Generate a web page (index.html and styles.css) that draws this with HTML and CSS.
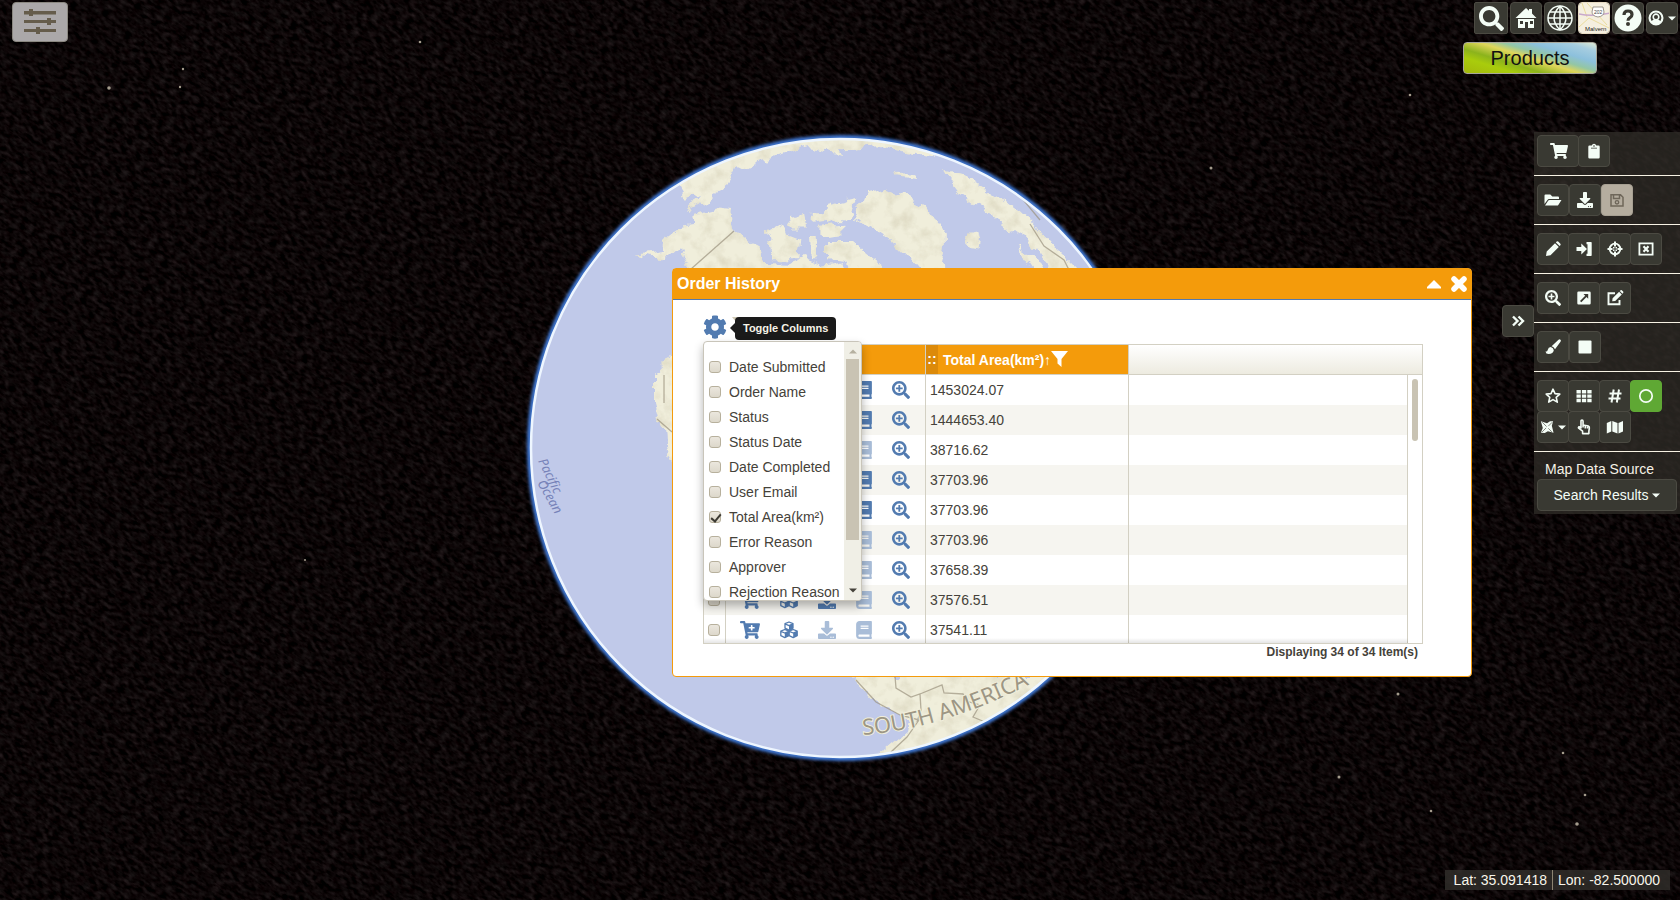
FILE: index.html
```html
<!DOCTYPE html>
<html lang="en">
<head>
<meta charset="utf-8">
<title>Order History</title>
<link rel="stylesheet" href="styles.css">
</head>
<body>
<svg class="defs" aria-hidden="true">
  <symbol id="i-search" viewBox="0 0 512 512"><path d="M505 442.7L405.3 343c-4.5-4.5-10.6-7-17-7H372c27.6-35.3 44-79.7 44-128C416 93.1 322.9 0 208 0S0 93.1 0 208s93.1 208 208 208c48.3 0 92.7-16.4 128-44v16.3c0 6.4 2.5 12.5 7 17l99.7 99.7c9.4 9.4 24.6 9.4 33.9 0l28.3-28.3c9.4-9.4 9.4-24.6.1-34zM208 336c-70.7 0-128-57.2-128-128 0-70.7 57.2-128 128-128 70.7 0 128 57.2 128 128 0 70.7-57.2 128-128 128z"/></symbol>
  <symbol id="i-zoom" viewBox="0 0 512 512"><path fill-rule="evenodd" d="M505 442.7L405.3 343c-4.5-4.5-10.6-7-17-7H372c27.6-35.3 44-79.7 44-128C416 93.1 322.9 0 208 0S0 93.1 0 208s93.1 208 208 208c48.3 0 92.7-16.4 128-44v16.3c0 6.4 2.5 12.5 7 17l99.7 99.7c9.4 9.4 24.6 9.4 33.9 0l28.3-28.3c9.4-9.4 9.4-24.6.1-34zM208 344a136 136 0 1 1 0-272 136 136 0 0 1 0 272z"/><path d="M182 112h52v70h70v52h-70v70h-52v-70h-70v-52h70z"/></symbol>
  <symbol id="i-cog" viewBox="0 0 512 512"><path d="M487.4 315.7l-42.6-24.6c4.3-23.2 4.3-47 0-70.2l42.6-24.6c4.9-2.8 7.1-8.6 5.5-14-11.1-35.6-30-67.8-54.7-94.6-3.8-4.1-10-5.1-14.8-2.3L380.8 110c-17.9-15.4-38.5-27.3-60.8-35.1V25.8c0-5.6-3.9-10.5-9.4-11.7-36.7-8.2-74.3-7.8-109.2 0-5.5 1.2-9.4 6.1-9.4 11.7V75c-22.2 7.9-42.8 19.8-60.8 35.1L88.7 85.5c-4.9-2.8-11-1.9-14.8 2.3-24.7 26.7-43.6 58.9-54.7 94.6-1.7 5.4.6 11.2 5.5 14L67.3 221c-4.3 23.2-4.3 47 0 70.2l-42.6 24.6c-4.9 2.8-7.1 8.6-5.5 14 11.1 35.6 30 67.8 54.7 94.6 3.8 4.1 10 5.1 14.8 2.3l42.6-24.6c17.9 15.4 38.5 27.3 60.8 35.1v49.2c0 5.6 3.9 10.5 9.4 11.7 36.7 8.2 74.3 7.8 109.2 0 5.5-1.2 9.4-6.1 9.4-11.7v-49.2c22.2-7.9 42.8-19.8 60.8-35.1l42.6 24.6c4.9 2.8 11 1.9 14.8-2.3 24.7-26.7 43.6-58.9 54.7-94.6 1.5-5.5-.7-11.3-5.6-14.1zM256 336c-44.1 0-80-35.9-80-80s35.9-80 80-80 80 35.9 80 80-35.9 80-80 80z"/></symbol>
  <symbol id="i-cartplus" viewBox="0 0 576 512"><path d="M504.717 320H211.572l6.545 32h268.418c15.401 0 26.816 14.301 23.403 29.319l-5.517 24.276C523.112 414.668 536 433.828 536 456c0 31.202-25.519 56.444-56.824 55.994-29.823-.429-54.35-24.631-55.155-54.447-.44-16.287 6.085-31.049 16.803-41.548H231.176C241.553 426.165 248 440.326 248 456c0 31.813-26.528 57.431-58.67 55.938-28.54-1.325-51.751-24.385-53.251-52.917-1.158-22.034 10.436-41.455 28.051-51.586L93.883 64H24C10.745 64 0 53.255 0 40V24C0 10.745 10.745 0 24 0h102.529c11.401 0 21.228 8.021 23.513 19.19L159.208 64H551.99c15.401 0 26.816 14.301 23.403 29.319l-47.273 208C525.637 312.246 515.923 320 504.717 320zM408 168h-48v-40c0-8.837-7.163-16-16-16h-16c-8.837 0-16 7.163-16 16v40h-48c-8.837 0-16 7.163-16 16v16c0 8.837 7.163 16 16 16h48v40c0 8.837 7.163 16 16 16h16c8.837 0 16-7.163 16-16v-40h48c8.837 0 16-7.163 16-16v-16c0-8.837-7.163-16-16-16z"/></symbol>
  <symbol id="i-cart" viewBox="0 0 576 512"><path d="M504.717 320H211.572l6.545 32h268.418c15.401 0 26.816 14.301 23.403 29.319l-5.517 24.276C523.112 414.668 536 433.828 536 456c0 31.202-25.519 56.444-56.824 55.994-29.823-.429-54.35-24.631-55.155-54.447-.44-16.287 6.085-31.049 16.803-41.548H231.176C241.553 426.165 248 440.326 248 456c0 31.813-26.528 57.431-58.67 55.938-28.54-1.325-51.751-24.385-53.251-52.917-1.158-22.034 10.436-41.455 28.051-51.586L93.883 64H24C10.745 64 0 53.255 0 40V24C0 10.745 10.745 0 24 0h102.529c11.401 0 21.228 8.021 23.513 19.19L159.208 64H551.99c15.401 0 26.816 14.301 23.403 29.319l-47.273 208C525.637 312.246 515.923 320 504.717 320z"/></symbol>
  <symbol id="i-book" viewBox="0 0 448 512"><path d="M448 360V24c0-13.3-10.7-24-24-24H96C43 0 0 43 0 96v320c0 53 43 96 96 96h328c13.3 0 24-10.7 24-24v-16c0-7.5-3.5-14.3-8.9-18.7-4.2-15.4-4.2-59.3 0-74.7 5.4-4.3 8.9-11.1 8.9-18.6zM128 134c0-3.3 2.7-6 6-6h212c3.3 0 6 2.7 6 6v20c0 3.3-2.7 6-6 6H134c-3.3 0-6-2.7-6-6v-20zm0 64c0-3.3 2.7-6 6-6h212c3.3 0 6 2.7 6 6v20c0 3.3-2.7 6-6 6H134c-3.3 0-6-2.7-6-6v-20zm253.4 250H96c-17.7 0-32-14.3-32-32 0-17.6 14.4-32 32-32h285.4c-1.9 17.1-1.9 46.9 0 64z"/></symbol>
  <symbol id="i-down" viewBox="0 0 512 512"><path d="M216 0h80c13.3 0 24 10.7 24 24v168h87.700c17.8 0 26.7 21.5 14.1 34.1L269.7 378.3c-7.500 7.5-19.8 7.5-27.3 0L90.1 226.1c-12.6-12.6-3.7-34.1 14.1-34.1H192V24c0-13.3 10.7-24 24-24zm296 376v112c0 13.3-10.7 24-24 24H24c-13.3 0-24-10.7-24-24V376c0-13.3 10.7-24 24-24h146.700l49 49c20.1 20.1 52.5 20.1 72.6 0l49-49H488c13.300 0 24 10.7 24 24zm-124 88c0-11-9-20-20-20s-20 9-20 20 9 20 20 20 20-9 20-20zm64 0c0-11-9-20-20-20s-20 9-20 20 9 20 20 20 20-9 20-20z"/></symbol>
  <symbol id="i-cubes" viewBox="0 0 18 18"><g stroke-width="1.300" fill="none" stroke="currentColor" stroke-linejoin="round"><path d="M9 1l4 1.700v4.500L9 9 5 7.200V2.700zM5 2.900l4 1.700 4-1.700M4.800 8.500l4 1.700v4.500l-4 1.900-4-1.900v-4.500zM.8 10.300l4 1.700 4-1.700M13.200 8.500l4 1.700v4.500l-4 1.900-4-1.900v-4.500zM9.200 10.300l4 1.700 4-1.700"/></g><path d="M9 4.600l4-1.700v4.300L9 9zM4.800 12l4-1.700v4.400l-4 1.900zM13.200 12l4-1.700v4.400l-4 1.900z"/></symbol>
  <symbol id="i-clip" viewBox="0 0 16 16"><path fill-rule="evenodd" d="M3.500 2.500h2.300a2.300 2.300 0 0 1 4.400 0h2.300q1.200 0 1.200 1.200v10.600q0 1.200-1.200 1.200h-9q-1.200 0-1.200-1.200V3.700q0-1.200 1.200-1.200zM8 2.200a.8.800 0 1 0 0 1.600.8.800 0 0 0 0-1.600zM5 4.700v.8h6v-.8z"/></symbol>
  <symbol id="i-folder" viewBox="0 0 18 16"><path d="M.5 12V3.500Q.5 2.500 1.500 2.500h4.800l2 2H14q1 0 1 1V7H5Q4 7 3.500 7.900z"/><path d="M1 13.500L4.300 8.600Q4.700 8 5.500 8h12L14.300 13q-.4.500-1.100.5z"/></symbol>
  <symbol id="i-save" viewBox="0 0 16 16"><path fill="none" stroke="currentColor" stroke-width="1.500" d="M2 2.800h9.500L14 5.300v8.700H2zM4.500 3v3.500h6V3"/><circle cx="8" cy="10.300" r="1.700" fill="none" stroke="currentColor" stroke-width="1.400"/></symbol>
  <symbol id="i-pencil" viewBox="0 0 16 16"><path d="M1 15l.7-4.500L10 2.200 13.800 6l-8.300 8.300zM10.900 1.400l.8-.8q.8-.5 1.500 0l2.200 2.200q.6.800 0 1.500l-.8.800z"/></symbol>
  <symbol id="i-import" viewBox="0 0 16 16"><path d="M.5 6h4.800V2.500L11 8l-5.700 5.500V10H.5zM10.500 1H15q.7 0 .7.700v12.600q0 .7-.7.700h-4.500v-2.300h1V3.300h-1z"/></symbol>
  <symbol id="i-cross" viewBox="0 0 16 16"><circle cx="8" cy="8" r="5.300" fill="none" stroke="currentColor" stroke-width="1.800"/><path d="M7 .5h2v5H7zM7 10.500h2v5H7zM.5 7h5v2h-5zM10.500 7h5v2h-5zM6 6h1.500v1.500H6zM8.500 6H10v1.500H8.500zM6 8.500h1.500V10H6zM8.500 8.500H10V10H8.500z"/></symbol>
  <symbol id="i-boxx" viewBox="0 0 16 16"><path fill="none" stroke="currentColor" stroke-width="1.800" d="M1.400 2.400h13.200v11.200H1.400z"/><path stroke="currentColor" stroke-width="2.200" d="M5.500 5.300l5 5.400M10.500 5.300l-5 5.400"/></symbol>
  <symbol id="i-expand" viewBox="0 0 16 16"><path fill-rule="evenodd" d="M2.500 1.500h11q1.200 0 1.200 1.200v10.600q0 1.200-1.200 1.200h-11q-1.200 0-1.200-1.200V2.700q0-1.200 1.200-1.200zM7.500 4l1.700 1.700-5.200 5.200 1.300 1.300L10.500 7l1.700 1.700V4z"/></symbol>
  <symbol id="i-edit" viewBox="0 0 17 16"><path fill="none" stroke="currentColor" stroke-width="1.900" d="M8.500 3.300H2v11h11V10"/><path d="M5.700 11.200l.4-3L12.600 1.700l2.700 2.700-6.600 6.500zM13.300 1l.8-.7q.6-.4 1.200 0l1.300 1.300q.6.600 0 1.300l-.7.800z"/></symbol>
  <symbol id="i-brush" viewBox="0 0 16 16"><path d="M15.500.7q.8.800 0 2L10 10.200Q8.800 7.800 6.600 7.200L13.500.8q1-.8 2-.1zM5.800 8q2.700.7 3 3.300-.5 3.700-5.300 3.700-2.700 0-3-2.500 1.700.5 2.200-1.500.6-2.800 3.100-3z"/></symbol>
  <symbol id="i-square" viewBox="0 0 16 16"><rect x="1.500" y="1.500" width="13" height="13" rx="1"/></symbol>
  <symbol id="i-star" viewBox="0 0 16 16"><path fill="none" stroke="currentColor" stroke-width="1.600" stroke-linejoin="round" d="M8 1.200l2 4.400 4.800.5-3.600 3.200 1.100 4.800L8 11.600l-4.300 2.500 1.100-4.800L1.200 6.100 6 5.600z"/></symbol>
  <symbol id="i-grid" viewBox="0 0 16 16"><path d="M.5 2h4.300v3.400H.5zM5.900 2h4.300v3.400H5.900zM11.300 2h4.300v3.400h-4.300zM.5 6.400h4.300v3.400H.5zM5.900 6.400h4.300v3.400H5.900zM11.300 6.400h4.300v3.400h-4.300zM.5 10.800h4.300v3.400H.5zM5.900 10.800h4.300v3.400H5.900zM11.300 10.800h4.300v3.400h-4.300z"/></symbol>
  <symbol id="i-hash" viewBox="0 0 16 16"><path fill="none" stroke="currentColor" stroke-width="2" d="M6.700 1.500l-2.200 13M12 1.500l-2.200 13M2.500 5.500h12M1.500 10.500h12"/></symbol>
  <symbol id="i-circle" viewBox="0 0 16 16"><circle cx="8" cy="8" r="6.200" fill="none" stroke="currentColor" stroke-width="1.700"/></symbol>
  <symbol id="i-shape" viewBox="0 0 16 16"><path d="M1 1.500l7 2.200 3.500-2.200 3.500 0-1.500 5L15.500 14.500 9 12.800 5.500 14.800 1 14.500 3.200 9z"/><path stroke="#393932" stroke-width=".7" d="M2.500 2.500l5 5M13.500 13.500l-4-4M14 2.500L9.500 7M2 14l5-5"/></symbol>
  <symbol id="i-hand" viewBox="0 0 16 17"><path fill="none" stroke="currentColor" stroke-width="1.700" stroke-linejoin="round" d="M4.800 10V2.300q0-1.200 1.100-1.200T7 2.300v4q2.800.2 5.500 1.200 1.300.5 1.200 2l-.5 3.500v2.500H6.500V13L2.300 9.800q-.6-.9.200-1.500.7-.4 2.300 1.200M7 6.500V9M9.400 7v3M11.700 7.500V10"/></symbol>
  <symbol id="i-map" viewBox="0 0 18 16"><path d="M.8 4l4.500-2v10.500l-4.500 2zM6.300 2l5.200 2v10.500l-5.200-2zM12.500 4L17 2v10.500l-4.500 2z"/></symbol>
  <symbol id="i-caret" viewBox="0 0 8 5"><path d="M0 .5h8L4 4.500z"/></symbol>
  <symbol id="i-funnel" viewBox="0 0 17 16"><path d="M0 0h17l-6.500 8v8L6.500 12.500V8z"/></symbol>
</svg>

<main class="map">
  <svg class="scene" viewBox="0 0 1680 900" preserveAspectRatio="xMidYMid slice" role="img" aria-label="Globe">
    <defs>
      <filter id="space" x="0" y="0" width="100%" height="100%" color-interpolation-filters="sRGB">
        <feTurbulence type="fractalNoise" baseFrequency="0.13 0.26" numOctaves="3" seed="8"/>
        <feColorMatrix values=".22 .10 0 0 -.115  .22 .06 0 0 -.118  .22 .07 0 0 -.120  0 0 0 0 1"/>
      </filter>
      <filter id="relief" x="0" y="0" width="100%" height="100%" color-interpolation-filters="sRGB">
        <feTurbulence type="fractalNoise" baseFrequency=".07" numOctaves="4" seed="3" result="n"/>
        <feDisplacementMap in="SourceGraphic" in2="n" scale="14" xChannelSelector="R" yChannelSelector="G" result="d"/>
        <feColorMatrix in="n" values="0 0 0 0 .76  0 0 0 0 .73  0 0 0 0 .62  .8 0 0 0 -.36" result="s"/>
        <feComposite in="s" in2="d" operator="in" result="t"/>
        <feMerge><feMergeNode in="d"/><feMergeNode in="t"/></feMerge>
      </filter>
      <filter id="soft"><feGaussianBlur stdDeviation="1.500"/></filter>
      <clipPath id="disc"><circle cx="840" cy="448" r="309"/></clipPath>
      <path id="southArc" d="M863 735Q955 728 1060 668"/>
    </defs>
    <rect width="1680" height="900" fill="#070304"/>
    <g transform="rotate(35 840 450)"><rect x="-200" y="-500" width="2080" height="1900" filter="url(#space)"/></g>
    <g fill="#a39b8c">
      <circle cx="109" cy="88" r="1.800"/><circle cx="183" cy="69" r="1.200"/><circle cx="180" cy="87" r="1.200"/><circle cx="1398" cy="694" r="1.500"/><circle cx="1339" cy="777" r="1.500"/><circle cx="1577" cy="824" r="1.800"/><circle cx="1585" cy="795" r="1.300"/><circle cx="1563" cy="753" r="1.300"/><circle cx="1431" cy="811" r="1.300"/><circle cx="1211" cy="168" r="1.500"/><circle cx="1410" cy="95" r="1.300"/><circle cx="420" cy="42" r="1.300"/><circle cx="305" cy="560" r="1"/>
    </g>
    <circle cx="840" cy="448" r="311" fill="#2450a0" stroke="#3f78d4" stroke-width="4" filter="url(#soft)"/>
    <circle cx="840" cy="448" r="309" fill="#c0c9e9"/>
    <g clip-path="url(#disc)">
      <g filter="url(#relief)">
        <rect width="1680" height="900" fill="none"/>
        <g fill="#f0eedb">
          <g transform="translate(520 130) scale(.3827)">
            <path d="M430 185L470 170 440 210 500 175 530 160 560 110 610 85 680 65 750 45 850 50 930 40 1000 55 1080 70 1040 0H700L400 130z"/>
            <path d="M515 205l40 5 8 50 37 30 30 20 12 35 58 2 40-15 50 20 50-10 10 40-10 35-410 2 10-60-20-60-50 45-65-18 65-10 5-28 45-35 30-5-5-25z"/>
            <path d="M645 265l40-20 10 25 40 15-5 50-70 0zM700 230l45-10 5 35-45 0zM765 215l35 0 0 20-35 5zM800 195l80-18-20 45-50 20-15-20zM785 250l60-5 0 25-60 5zM755 285l20 0 5 50-20 0zM805 290l60 0 60 50 45 35-15 20-50-10-60-45-40-5zM880 370l50 15 20 29-75 0z"/>
            <path d="M885 205l15-40 60-13 50 23 50 25 50 65v45l-10 40 22 64-47-4-25-35-40-45-50-50-45-30-45-20z"/>
            <path d="M1165 295l20-25 20 15-5 27-25-4zM985 112l45 10 5 12-45-8zM750 42l80 5 20 18-45-7z"/>
            <path d="M1105 105l55 15 100 60 70 50 70 80 105 105-95-5-30-60-40-50-50-30-90-70-50-35zM1295 305l45 25 30 40-5 30-25-30zM1390 350l70 30 30 35-80 0z"/>
          </g>
          <path d="M680 338l-14 27-12 13v25l4 15 6 10 1 18 5 14 10 15 25-10V338z"/>
          <path d="M848 675l12 10 16 18 20 10 12 8-2 10-14 12-14 12 40 10 190-90z"/>
        </g>
      </g>
      <g fill="none" stroke="#9b937f" stroke-width="1.300" opacity=".7">
        <path d="M734 231l-43 38M895 676l1 12 15 9 9-3 1 16-4 12M920 694l22-9 2 8 19 1 3 7 14 4-7 12 12 5M664 375v28M657 419l15 13M856 680l20 22 24 13 19 5-12 17-16 15M1030 224l14 22 20 14 16 32M1015 190l25 30"/>
      </g>
      <g class="mapText">
        <text class="mapText-sea" transform="translate(538 461) rotate(64)">Pacific</text>
        <text class="mapText-sea" transform="translate(537 483) rotate(60)">Ocean</text>
        <text class="mapText-land"><textPath href="#southArc">SOUTH AMERICA</textPath></text>
      </g>
    </g>
    <circle cx="840" cy="448" r="309" fill="none" stroke="#eef6ff" stroke-width="2.500"/>
  </svg>

  <button class="layers" aria-label="Layers"><svg viewBox="0 0 32 26"><path d="M0 2h32v3.500H0zM0 11h32v3H0zM0 20h32v3H0zM5 0h4v7H5zM23 9h4v7h-4zM12 18h4v7h-4z"/></svg></button>

  <nav class="top" aria-label="Main">
    <div class="top-row">
      <button class="btn btn-search" aria-label="Search"><svg class="ic25"><use href="#i-search"/></svg></button>
      <button class="btn" aria-label="Home"><svg class="ic22" viewBox="0 0 22 22"><path fill-rule="evenodd" d="M11 1l3 2.800V2h3v4.500L21.500 11H.5zM3 12h16v9h-6v-6h-3v6H3zM5 14v3h3v-3zM15 14v3h3v-3z"/></svg></button>
      <button class="btn" aria-label="Globe"><svg class="ic26" viewBox="0 0 26 26"><g fill="none" stroke="currentColor" stroke-width="1.500"><circle cx="13" cy="13" r="12"/><path d="M13 1v24M1 13h24M3 7h20M3 19h20M13 1Q1 13 13 25M13 1q12 12 0 24"/></g></svg></button>
      <button class="btn btn-thumb" aria-label="Base map"><svg viewBox="0 0 31 31"><path fill="#f5efdf" d="M0 0h31v31H0z"/><path fill="none" stroke="#eadb9c" d="M0 24l10-9 20 10M3 0l5 14M8 0l20 22"/><path fill="none" stroke="#c9a8cb" stroke-width="1.500" d="M0 11q14 3 31-1"/><path fill="#fff" stroke="#776f66" stroke-width=".7" d="M14 4h10l1 5q0 4-6 5-6-1-6-5z"/><text class="thumb-no" x="15" y="11">202</text><text class="thumb-name" x="6" y="28">Malvern</text></svg></button>
      <button class="btn" aria-label="Help"><svg class="ic28" viewBox="0 0 28 28"><circle cx="14" cy="14" r="13.500"/><path fill="none" stroke="#393932" stroke-width="3.200" d="M10 11q0-4 4-4t4 3.500q0 2-2 3.200t-2 3"/><circle cx="14" cy="20" r="2" fill="#393932"/></svg></button>
      <button class="btn" aria-label="Account"><svg class="ic16" viewBox="0 0 16 16"><path fill-rule="evenodd" d="M8 .5a7.500 7.500 0 1 0 0 15 7.500 7.500 0 0 0 0-15zM8 2.500a5.500 5.500 0 0 1 4.500 8.600Q11.500 10 10.300 9.700a3.600 3.600 0 1 0-4.600 0Q4.500 10 3.500 11.100A5.500 5.500 0 0 1 8 2.500z"/><circle cx="8" cy="6.900" r="2" fill="#393932"/></svg><svg class="caret"><use href="#i-caret"/></svg></button>
    </div>
    <button class="products">Products</button>
  </nav>

  <aside class="tools">
    <button class="btn tools-tab" aria-label="Collapse tools"><svg class="ic16" viewBox="0 0 16 16"><path class="line" d="M3 3.500L7.500 8 3 12.500M8.500 3.500L13 8l-4.500 4.500"/></svg></button>
    <section class="group group-first"><button class="btn wide" aria-label="Cart"><svg class="ic18"><use href="#i-cart"/></svg></button><button class="btn" aria-label="Orders"><svg class="ic16"><use href="#i-clip"/></svg></button></section>
    <section class="group loose"><button class="btn" aria-label="Open"><svg class="ic18"><use href="#i-folder"/></svg></button><button class="btn" aria-label="Download"><svg class="ic16"><use href="#i-down"/></svg></button><button class="btn off" aria-label="Save" disabled><svg class="ic16"><use href="#i-save"/></svg></button></section>
    <section class="group"><button class="btn" aria-label="Draw"><svg class="ic16"><use href="#i-pencil"/></svg></button><button class="btn" aria-label="Import"><svg class="ic16"><use href="#i-import"/></svg></button><button class="btn" aria-label="Locate"><svg class="ic16"><use href="#i-cross"/></svg></button><button class="btn" aria-label="Clear"><svg class="ic16"><use href="#i-boxx"/></svg></button></section>
    <section class="group"><button class="btn" aria-label="Zoom in"><svg class="ic16"><use href="#i-zoom"/></svg></button><button class="btn" aria-label="Extent"><svg class="ic16"><use href="#i-expand"/></svg></button><button class="btn" aria-label="Edit"><svg class="ic18"><use href="#i-edit"/></svg></button></section>
    <section class="group loose"><button class="btn" aria-label="Style"><svg class="ic16"><use href="#i-brush"/></svg></button><button class="btn" aria-label="Fill"><svg class="ic16"><use href="#i-square"/></svg></button></section>
    <section class="group"><button class="btn" aria-label="Favourites"><svg class="ic16"><use href="#i-star"/></svg></button><button class="btn" aria-label="Grid"><svg class="ic16"><use href="#i-grid"/></svg></button><button class="btn" aria-label="Graticule"><svg class="ic16"><use href="#i-hash"/></svg></button><button class="btn on" aria-label="Globe view" aria-pressed="true"><svg class="ic16"><use href="#i-circle"/></svg></button><button class="btn" aria-label="Shapes"><svg class="ic14"><use href="#i-shape"/></svg><svg class="caret"><use href="#i-caret"/></svg></button><button class="btn" aria-label="Pick"><svg class="ic16"><use href="#i-hand"/></svg></button><button class="btn" aria-label="Map"><svg class="ic18"><use href="#i-map"/></svg></button></section>
    <section class="source"><span class="source-label" id="srcLabel">Map Data Source</span><button class="btn source-btn" aria-describedby="srcLabel">Search Results <svg class="caret"><use href="#i-caret"/></svg></button></section>
  </aside>

  <section class="dialog" role="dialog" aria-labelledby="dlgTitle">
    <header class="dialog-head"><h1 id="dlgTitle">Order History</h1>
      <button class="plain" aria-label="Collapse"><svg class="up" viewBox="0 0 14 9"><path d="M7 0l7 7v1.500H0V7z"/></svg></button>
      <button class="plain" aria-label="Close"><svg class="ic18" viewBox="0 0 18 18"><path stroke="currentColor" stroke-width="5.500" stroke-linecap="round" d="M4 4l10 10M14 4L4 14"/></svg></button>
    </header>
    <div class="dialog-body">
      <div class="bar">
        <button class="plain gear" aria-label="Toggle Columns"><svg><use href="#i-cog"/></svg></button>
        <svg class="ghost"><use href="#i-funnel"/></svg>
        <span class="tip" role="tooltip">Toggle Columns</span>
        <div class="menu">
          <div class="menu-list">
            <label><input type="checkbox">Date Submitted</label>
            <label><input type="checkbox">Order Name</label>
            <label><input type="checkbox">Status</label>
            <label><input type="checkbox">Status Date</label>
            <label><input type="checkbox">Date Completed</label>
            <label><input type="checkbox">User Email</label>
            <label><input type="checkbox" checked>Total Area(km²)</label>
            <label><input type="checkbox">Error Reason</label>
            <label><input type="checkbox">Approver</label>
            <label><input type="checkbox">Rejection Reason</label>
          </div>
          <div class="menu-scroll"><svg class="arr dim" viewBox="0 0 8 5"><path d="M0 4.500h8L4 .5z"/></svg><span class="menu-thumb"></span><svg class="arr"><use href="#i-caret"/></svg></div>
        </div>
      </div>
      <div class="grid">
        <table>
          <colgroup><col class="c-check"><col class="c-act"><col class="c-area"><col><col class="c-scroll"></colgroup>
          <thead><tr><th class="hot" colspan="2"></th><th class="hot area"><div class="area-in"><span class="grip">::</span><span>Total Area(km²)↑</span><svg class="funnel"><use href="#i-funnel"/></svg></div></th><th class="rest" colspan="2"></th></tr></thead>
          <tbody id="rows"></tbody>
        </table>
        <div class="fade"></div>
      </div>
      <p class="count">Displaying 34 of 34 Item(s)</p>
    </div>
  </section>

  <footer class="coords"><span>Lat: 35.091418</span><span>Lon: -82.500000</span></footer>
</main>
<script src="rows.js"></script>
</body>
</html>
```
FILE: rows.js
```js
const orders = [
  ["1453024.07", true, true], ["1444653.40", true, true], ["38716.62", false, false],
  ["37703.96", true, true], ["37703.96", true, true], ["37703.96", false, false],
  ["37658.39", false, false], ["37576.51", true, false], ["37541.11", false, false]
];

function action(icon, label, enabled) {
  return `<button class="act act-${icon}" aria-label="${label}"${enabled ? "" : " disabled"}><svg><use href="#i-${icon}"/></svg></button>`;
}

document.getElementById("rows").innerHTML = orders.map(([area, download, book], i) => `<tr>
  <td class="check"><input type="checkbox" aria-label="Select order ${i + 1}"></td>
  <td><div class="acts">${action("cartplus", "Add to cart", true)}${action("cubes", "Items", true)}${action("down", "Download", download)}${action("book", "Report", book)}${action("zoom", "Zoom to", true)}</div></td>
  <td class="num">${area}</td><td></td>
  ${i === 0 ? `<td class="track" rowspan="${orders.length}"><span class="thumb"></span></td>` : ""}
</tr>`).join("");
```
FILE: styles.css
```css
* { box-sizing: border-box; }
body { margin: 0; background: #070304; font: 14px/20px "Liberation Sans", Arial, sans-serif; color: #45423a; }
button { font: inherit; color: inherit; margin: 0; padding: 0; cursor: pointer; }
svg { fill: currentColor; display: block; flex: none; }
.defs { position: absolute; width: 0; height: 0; }
.map { position: relative; height: 100vh; overflow: hidden; }
.scene { position: absolute; width: 100%; height: 100%; }
.mapText { font-family: "Noto Sans", sans-serif; }
.mapText-sea { font-size: 13px; font-style: italic; fill: #7682b8; }
.mapText-land { font-size: 22px; fill: #9d9684; stroke: #f0eedb; stroke-width: 2px; paint-order: stroke; }

.ic14 { width: 14px; height: 14px; }
.ic16 { width: 16px; height: 16px; }
.ic18 { width: 18px; height: 16px; }
.ic22 { width: 22px; height: 22px; }
.ic25 { width: 25px; height: 25px; }
.ic26 { width: 26px; height: 26px; }
.ic28 { width: 28px; height: 28px; }
.caret { width: 8px; height: 5px; margin-left: 4px; }
.line { fill: none; stroke: currentColor; stroke-width: 2.400; }

.btn { display: inline-flex; align-items: center; justify-content: center; width: 32px; height: 32px; border: 1px solid #4b4a42; border-radius: 4px; background: #393932; color: #f4fdf6; }
.plain { border: 0; background: none; color: #fff; display: flex; }

.layers { position: absolute; left: 12px; top: 2px; width: 56px; height: 40px; border: 1px solid #8b8881; border-radius: 4px; background: #aba8a9; color: #655c4b; display: flex; align-items: center; justify-content: center; }
.layers svg { width: 32px; height: 26px; }

.top { position: absolute; right: 2px; top: 2px; }
.top-row { display: flex; gap: 2px; }
.btn-search { width: 34px; border-radius: 2px; }
.btn-thumb { overflow: hidden; border-color: #e8dcc4; }
.btn-thumb svg { width: 31px; height: 31px; }
.thumb-no { font-size: 5px; fill: #444; }
.thumb-name { font-size: 6px; fill: #222; }
.products { display: block; width: 134px; height: 32px; margin: 8px 0 0 -11px; border: 1px solid #a8a79b; border-radius: 4px; color: #111; font-size: 20px; background: linear-gradient(17deg, #a3b80b 0%, #a9cc0c 22%, #8cb31c 34%, #dfd65b 50%, #93c6a5 60%, #8cc0dc 72%, #a6cde0 88%, #dfead4 100%); }

.tools { position: absolute; right: 0; top: 132px; width: 146px; background: rgba(48, 45, 40, .75); color: #f5f1e6; }
.tools-tab { position: absolute; right: 100%; top: 173px; }
.group { display: flex; flex-wrap: wrap; padding: 8px 16px 8px 3px; border-bottom: 1px solid #f7f2e4; }
.group-first { padding-top: 3px; }
.group .btn { margin: 0 -1px -1px 0; }
.group .btn:last-child, .group-first .btn { margin-bottom: 0; }
.loose .btn { margin-right: 0; }
.group .wide { width: 42px; padding-left: 2px; }
.group .on { background: #5fa834; border-color: #5fa834; z-index: 1; }
.group .off { background: #b5ad9f; border-color: #a69f92; color: #6f675a; }
.source { padding: 7px 3px 3px; }
.source-label { display: block; padding: 0 8px; }
.source-btn { width: 100%; }

.coords { position: absolute; right: 10px; bottom: 10px; display: flex; background: rgba(50, 48, 44, .8); color: #f8f5ea; }
.coords span { padding: 0 5px; }
.coords span:first-child { padding-left: 9px; border-right: 1px solid #8b8371; }
.coords span:last-child { padding-right: 10px; }

.dialog { position: absolute; left: 672px; top: 268px; width: 800px; border: 1px solid #f49b0b; border-radius: 4px; background: #fff; }
.dialog-head { display: flex; align-items: center; gap: 9px; height: 31px; padding: 0 3px 0 4px; background: #f49b0b; border-bottom: 1px solid #5479ae; color: #fff; }
.dialog-head h1 { flex: 1; margin: 0; font-size: 16px; line-height: 20px; }
.dialog-head .ic18 { height: 18px; }
.up { width: 14px; height: 9px; }
.dialog-body { padding: 15px 48px 16px 30px; }

.bar { position: relative; height: 29px; display: flex; align-items: flex-start; }
.gear { color: #527bb0; }
.gear svg { width: 24px; height: 24px; }
.ghost { width: 17px; height: 16px; margin: 2px 0 0 5px; color: #cfc8b4; }
.tip { position: absolute; left: 32px; top: 2px; padding: 0 8px; border-radius: 4px; background: #1a1a1a; color: #f6f3e8; font-size: 11px; font-weight: bold; line-height: 23px; white-space: nowrap; }
.tip::before { content: ""; position: absolute; left: -5px; top: 6px; border: 5px solid transparent; border-left: 0; border-right-color: #1a1a1a; }
.menu { position: absolute; z-index: 2; left: 0; top: 26px; width: 159px; height: 260px; display: flex; overflow: hidden; background: #fff; border: 1px solid #c9c5ba; border-radius: 4px; box-shadow: 0 5px 10px rgba(0, 0, 0, .3); }
.menu-list { flex: 1; padding: 12px 0 0 5px; }
.menu-list label { display: flex; align-items: center; gap: 8px; height: 25px; white-space: nowrap; }
.menu-scroll { width: 17px; padding: 7px 1px; display: flex; flex-direction: column; align-items: center; background: #f0efe6; }
.menu-thumb { width: 13px; height: 181px; margin: 5px 0 auto; background: #c9c3b3; }
.arr { width: 8px; height: 5px; }
.dim { color: #b5b09f; }

input[type="checkbox"] { appearance: none; position: relative; flex: none; width: 12px; height: 12px; margin: 0; border: 1px solid #b7b09c; border-radius: 3px; background: linear-gradient(#ebe7de, #ddd8cb); }
input:checked::after { content: ""; position: absolute; left: 3px; top: 0; width: 4px; height: 8px; border: solid #3c3a33; border-width: 0 2px 2px 0; transform: rotate(40deg); }

.grid { position: relative; height: 300px; overflow: hidden; border: 1px solid #d3d0c3; }
table { width: 100%; table-layout: fixed; border-collapse: separate; border-spacing: 0; }
.c-check { width: 22px; }
.c-act { width: 200px; }
.c-area { width: 203px; }
.c-scroll { width: 14px; }
th, td { height: 30px; padding: 0; border-right: 1px solid #d3d0c3; text-align: left; }
th { border-bottom: 1px solid #d3d0c3; }
th:last-child, .track { border-right: 0; }
.hot { background: #f49b0b; color: #fff; }
.area-in { display: flex; align-items: center; height: 29px; }
.grip { width: 12px; margin-right: 5px; line-height: 29px; text-align: center; background: #dc8a0a; }
.funnel { width: 17px; height: 16px; margin-bottom: 2px; }
.rest { background: linear-gradient(#fff, #edebe0); }
tbody tr:nth-child(even) td { background: #f6f5f0; }
.check input { display: block; margin: 0 0 0 4px; }
.num { padding-left: 4px; }
.track { padding: 4px; vertical-align: top; }
.thumb { display: block; width: 6px; height: 62px; border-radius: 3px; background: #c9c3b3; }
.acts { display: flex; align-items: center; padding-left: 14px; color: #527bb0; }
.act { display: flex; border: 0; background: none; height: 18px; color: #527bb0; }
.act:disabled { color: #a9bdd8; }
.act svg { width: 18px; height: 18px; }
.act-cartplus { width: 40px; }
.act-cartplus svg { width: 20px; }
.act-cubes, .act-down { width: 38px; }
.act-book { width: 36px; }
.act-book svg { width: 16px; }
.fade { position: absolute; left: 0; right: 14px; bottom: 0; height: 5px; background: linear-gradient(rgba(0, 0, 0, 0), rgba(0, 0, 0, .1)); }
.count { margin: 0; padding-right: 5px; text-align: right; font-size: 12px; font-weight: bold; line-height: 16px; }
```
